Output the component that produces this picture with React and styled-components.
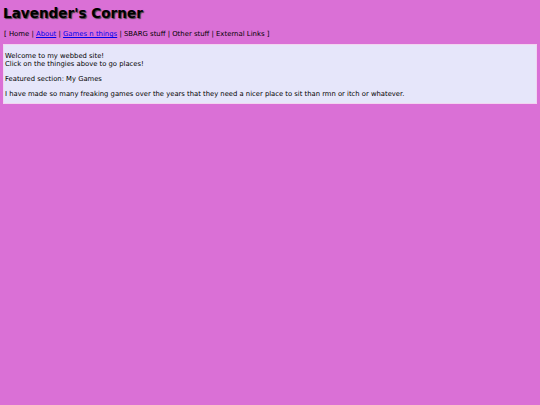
import React from "react";
import styled, { createGlobalStyle } from "styled-components";

const GlobalStyle = createGlobalStyle`
  html, body {
    margin: 0;
    padding: 0;
    background: #da70d6;
  }
  body {
    padding: 4px 3px;
    font-family: "DejaVu Sans", Verdana, sans-serif;
    color: #000;
  }
`;

const Title = styled.h1`
  margin: 0;
  padding-top: 1px;
  font-size: 13.6px;
  font-weight: 700;
  line-height: 16px;
  text-shadow: 1px 1px 1px #444;
`;

const Nav = styled.div`
  margin: 8px 1px 5px;
  font-size: 6.9px;
  line-height: 10px;
`;

const NavLink = styled.a`
  color: #0000ee;
  text-decoration: underline;
`;

const Box = styled.div`
  background: #e6e6fa;
  border: 1px solid #f2d4f0;
  padding: 7px 1px 5px;
  font-size: 6.8px;
  line-height: 8px;
`;

const Para = styled.p`
  margin: 0 0 ${(p) => p.gap || 7}px;
  &:last-child {
    margin-bottom: 0;
  }
`;

const App = () => (
  <>
    <GlobalStyle />
    <Title>Lavender's Corner</Title>
    <Nav>
      [ Home | <NavLink href="#">About</NavLink> |{" "}
      <NavLink href="#">Games n things</NavLink> | SBARG stuff | Other stuff |
      External Links ]
    </Nav>
    <Box>
      <Para>
        Welcome to my webbed site!
        <br />
        Click on the thingies above to go places!
      </Para>
      <Para>Featured section: My Games</Para>
      <Para>
        I have made so many freaking games over the years that they need a
        nicer place to sit than rmn or itch or whatever.
      </Para>
    </Box>
  </>
);

export default App;
